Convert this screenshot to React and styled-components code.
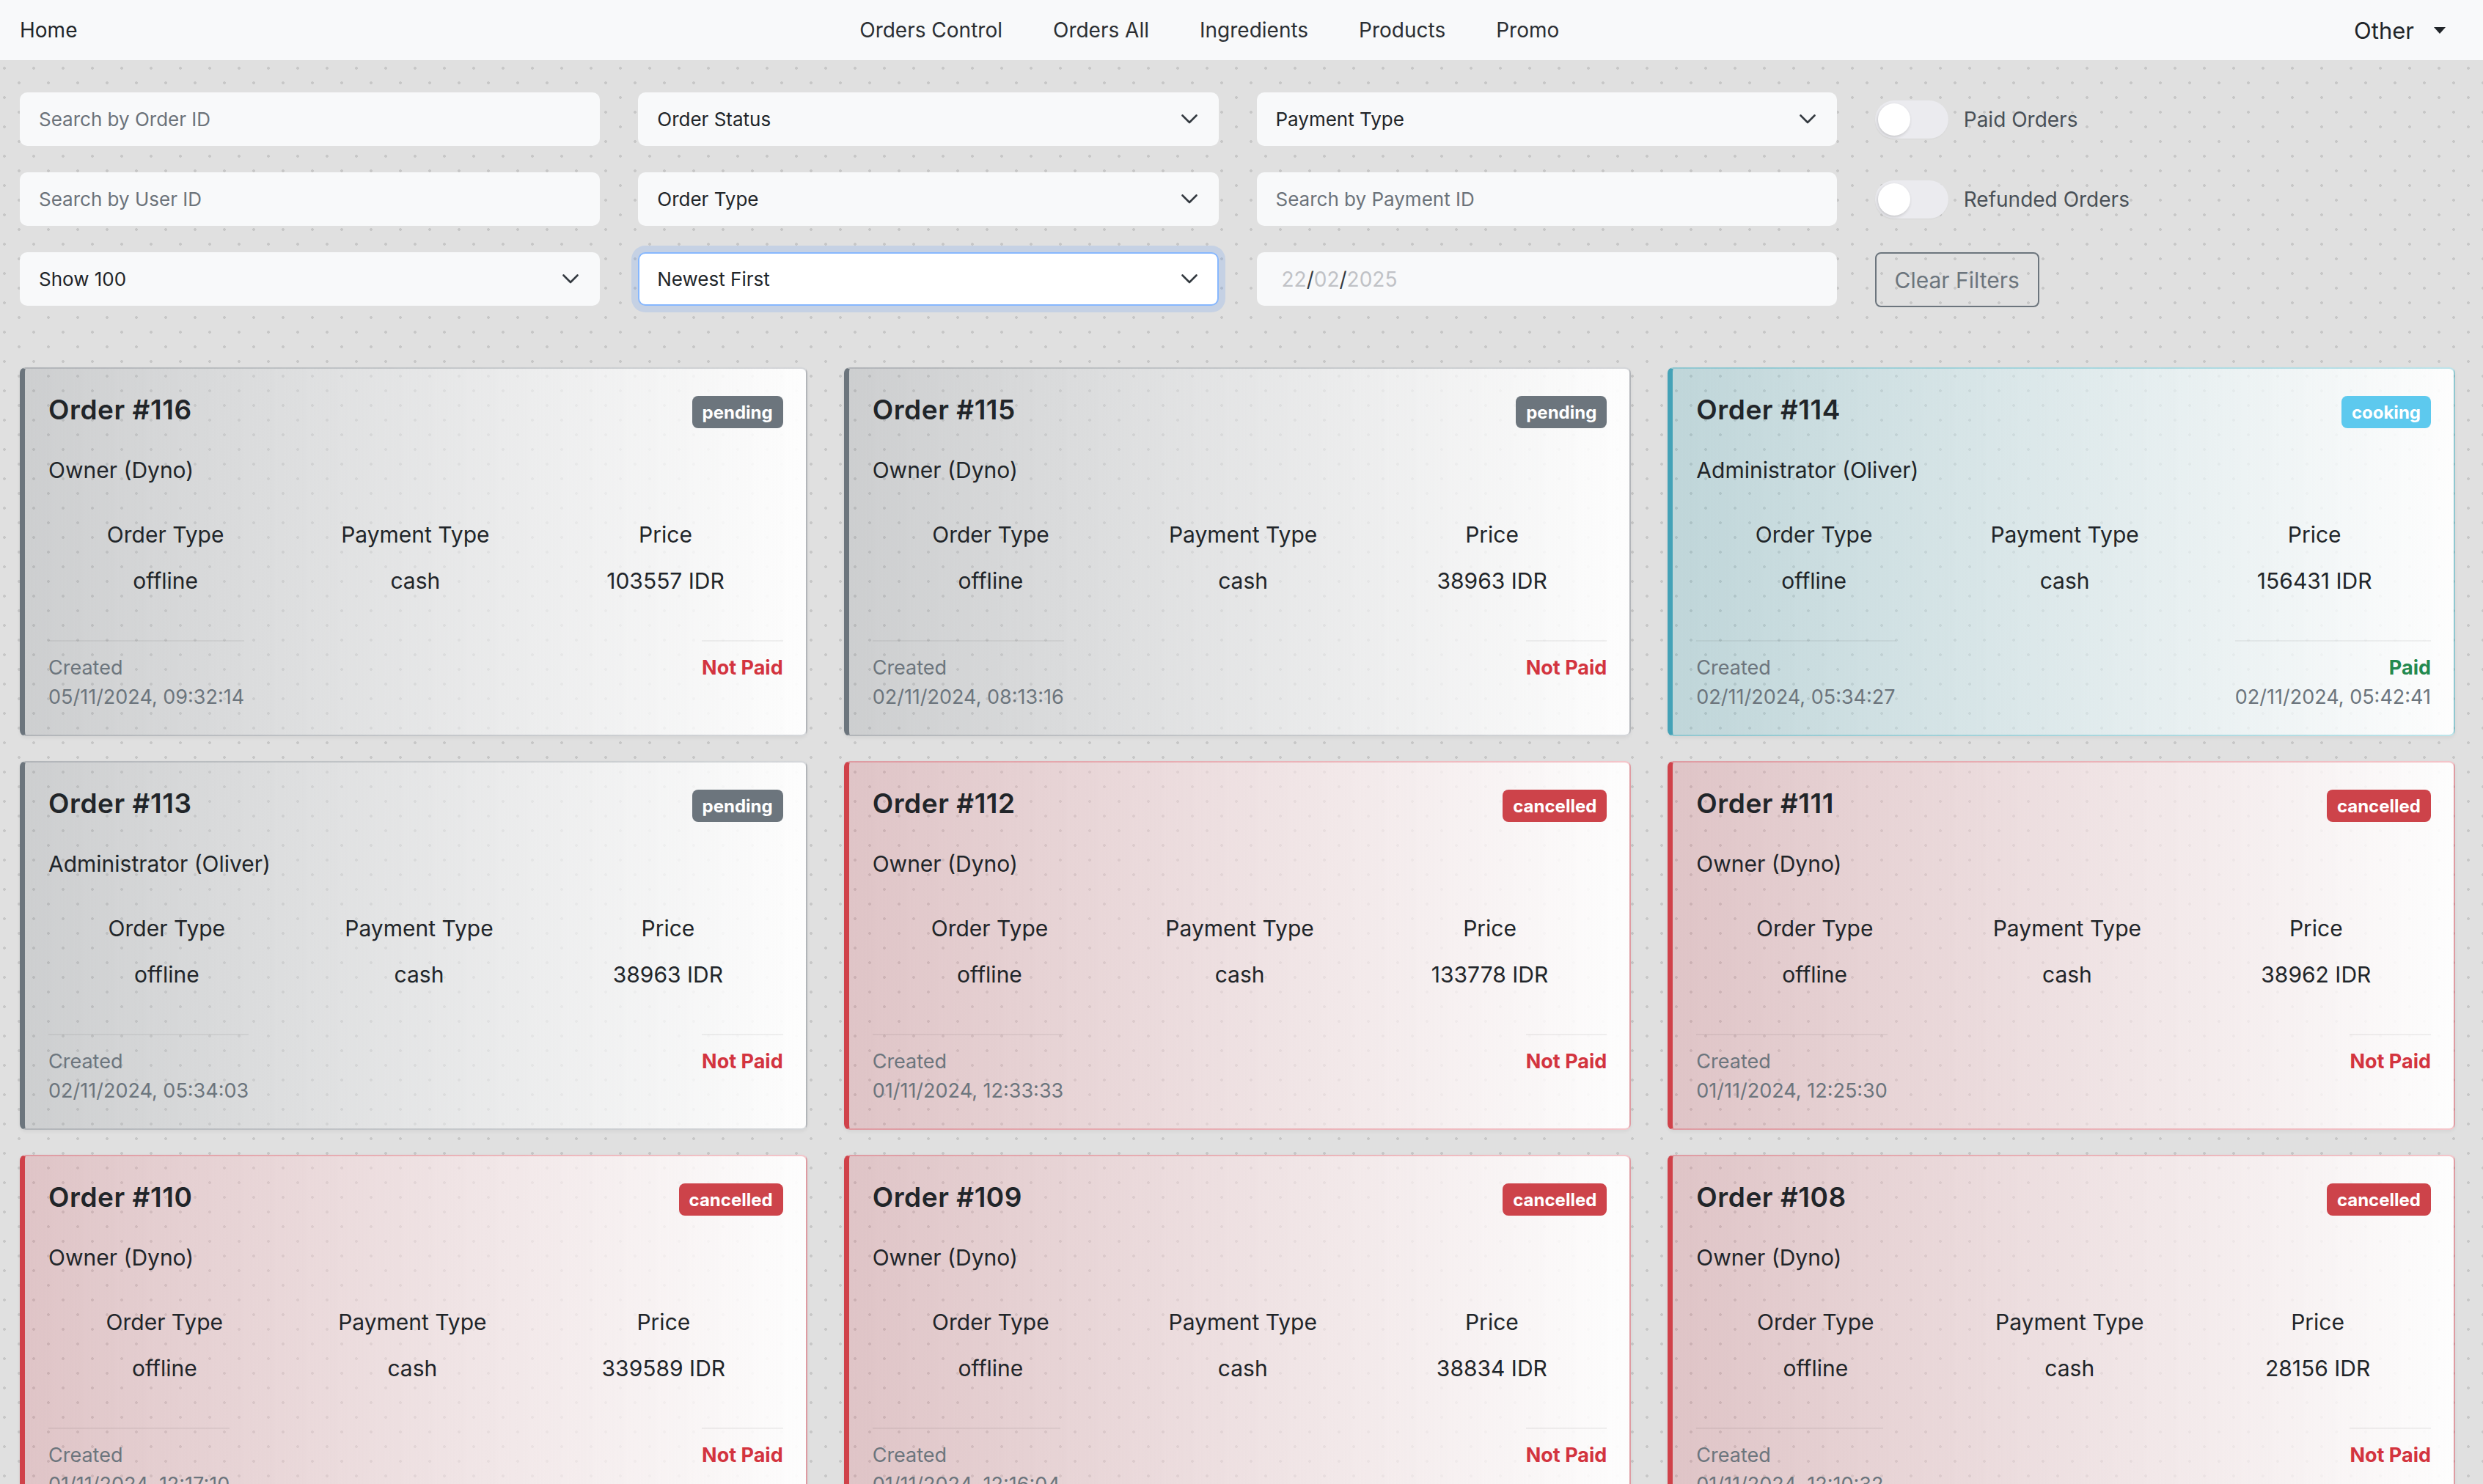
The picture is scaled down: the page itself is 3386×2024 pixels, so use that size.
import React from "react";
import styled, { createGlobalStyle } from "styled-components";

const GlobalStyle = createGlobalStyle`
  html, body {
    margin: 0;
    padding: 0;
  }
  body {
    font-family: Inter, "Noto Sans", "Liberation Sans", sans-serif;
    color: #212529;
    background-color: #e0e0e0;
    background-image:
      radial-gradient(circle at center, #c7c7c7 1.6px, transparent 2.2px),
      radial-gradient(circle at center, #c7c7c7 1.6px, transparent 2.2px);
    background-size: 40px 40px, 40px 40px;
    background-position: -14px -7px, 6px 13px;
    min-height: 2024px;
  }
  * { box-sizing: border-box; }
`;

const Nav = styled.nav`
  display: flex;
  align-items: center;
  height: 82px;
  background: #f8f9fa;
  padding: 0 34px 0 27px;
`;

const Brand = styled.span`
  font-size: 28px;
  color: #212529;
`;

const NavLinks = styled.div`
  display: flex;
  margin: 0 auto;
`;

const NavLink = styled.span`
  font-size: 28px;
  color: #2b2f33;
  padding: 0 34.5px;
`;

const Dropdown = styled.div`
  display: flex;
  align-items: center;
  padding: 0 17px;
  font-size: 31px;
  color: #212529;
`;

const Caret = styled.span`
  margin-left: 27px;
  width: 0;
  height: 0;
  border-top: 9px solid #212529;
  border-left: 8px solid transparent;
  border-right: 8px solid transparent;
`;

const Main = styled.main`
  padding: 44px 38px 0 27px;
`;

const Filters = styled.div`
  display: grid;
  grid-template-columns: repeat(4, 1fr);
  column-gap: 52px;
  row-gap: 36px;
`;

const Field = styled.input`
  height: 73px;
  width: 100%;
  border-radius: 10px;
  border: 2px solid transparent;
  background: #f8f9fa;
  padding: 0 24px;
  font-family: inherit;
  font-size: 26px;
  color: #212529;
  outline: none;
  &::placeholder {
    color: #6c737a;
  }
`;

const SelectBox = styled.div`
  height: 73px;
  border-radius: 10px;
  border: 2px solid ${(p) => (p.$focused ? "#86b7fe" : "transparent")};
  background: ${(p) => (p.$focused ? "#ffffff" : "#f8f9fa")};
  box-shadow: ${(p) => (p.$focused ? "0 0 0 9px rgba(13, 110, 253, 0.13)" : "none")};
  padding: 0 27px 0 24px;
  display: flex;
  align-items: center;
  justify-content: space-between;
  font-size: 26px;
  color: #212529;
`;

const DateBox = styled.div`
  height: 73px;
  border-radius: 10px;
  border: 2px solid transparent;
  background: #f8f9fa;
  padding: 0 32px;
  display: flex;
  align-items: center;
  font-size: 28px;
  color: #c0c2c6;
`;

const DateSep = styled.span`
  color: #343a40;
`;

const SwitchRow = styled.div`
  display: flex;
  align-items: center;
  height: 73px;
`;

const Track = styled.div`
  width: 100px;
  height: 52px;
  border-radius: 26px;
  background: #ebebef;
  padding: 4px;
  box-shadow: 0 1px 2px rgba(0, 0, 0, 0.04);
`;

const Knob = styled.div`
  width: 44px;
  height: 44px;
  border-radius: 50%;
  background: #ffffff;
  box-shadow: -1px 2px 4px rgba(0, 0, 0, 0.16);
`;

const SwitchLabel = styled.span`
  margin-left: 21px;
  font-size: 28px;
  color: #495057;
`;

const ClearButton = styled.button`
  align-self: center;
  justify-self: start;
  width: 224px;
  height: 75px;
  border: 2px solid #6c757d;
  border-radius: 8px;
  background: transparent;
  color: #6c757d;
  font-family: inherit;
  font-size: 30px;
  padding: 0;
`;

const Cards = styled.div`
  margin-top: 82px;
  display: grid;
  grid-template-columns: repeat(3, 1fr);
  column-gap: 50px;
  row-gap: 34px;
`;

const tones = {
  pending: { bar: "#6c757d", rgb: "108, 117, 125", badge: "#6c757d" },
  cooking: { bar: "#44a2b7", rgb: "23, 162, 184", badge: "#5dc9ee" },
  cancelled: { bar: "#d0424a", rgb: "220, 53, 69", badge: "#cd434a" },
};

const Card = styled.div`
  border: 2px solid rgba(${(p) => tones[p.$tone].rgb}, 0.28);
  border-left: 7px solid ${(p) => tones[p.$tone].bar};
  border-radius: 8px;
  background: linear-gradient(
    to right,
    rgba(${(p) => tones[p.$tone].rgb}, 0.16),
    rgba(255, 255, 255, 0.93)
  );
  box-shadow: 0 2px 5px rgba(0, 0, 0, 0.06);
  padding: 33px 31px 31px 32px;
`;

const CardHeader = styled.div`
  display: flex;
  justify-content: space-between;
  align-items: flex-start;
  height: 48px;
`;

const Title = styled.h5`
  margin: 0;
  font-size: 37px;
  line-height: 46px;
  font-weight: 600;
  letter-spacing: 0.015em;
  color: #212529;
`;

const Badge = styled.span`
  margin-top: 4px;
  height: 44px;
  padding: 0 14px;
  border-radius: 8px;
  background: ${(p) => tones[p.$tone].badge};
  color: #ffffff;
  font-size: 24px;
  font-weight: 700;
  display: inline-flex;
  align-items: center;
`;

const Owner = styled.div`
  margin-top: 39px;
  font-size: 30px;
  line-height: 36px;
`;

const InfoRow = styled.div`
  margin-top: 52px;
  display: flex;
  justify-content: space-around;
`;

const InfoCol = styled.div`
  display: flex;
  flex-direction: column;
  align-items: center;
  gap: 27px;
  font-size: 30px;
  line-height: 36px;
`;

const Footer = styled.div`
  margin-top: 63px;
  display: flex;
  justify-content: space-between;
  align-items: flex-start;
`;

const FooterBlock = styled.div`
  border-top: 2px solid rgba(0, 0, 0, 0.05);
  padding-top: 16px;
  font-size: 27px;
  line-height: 40px;
  text-align: ${(p) => p.$align};
`;

const Muted = styled.div`
  color: #6c757d;
`;

const PayStatus = styled.div`
  font-weight: 700;
  color: ${(p) => (p.$paid ? "#23894f" : "#d3343f")};
`;

const Chevron = () => (
  <svg width="22" height="13" viewBox="0 0 22 13" fill="none">
    <path d="M1.5 1.5 L11 11 L20.5 1.5" stroke="#343a40" strokeWidth="2.6" strokeLinecap="round" strokeLinejoin="round" />
  </svg>
);

const orders = [
  { id: 116, status: "pending", user: "Owner (Dyno)", price: "103557 IDR", created: "05/11/2024, 09:32:14" },
  { id: 115, status: "pending", user: "Owner (Dyno)", price: "38963 IDR", created: "02/11/2024, 08:13:16" },
  { id: 114, status: "cooking", user: "Administrator (Oliver)", price: "156431 IDR", created: "02/11/2024, 05:34:27", paidAt: "02/11/2024, 05:42:41" },
  { id: 113, status: "pending", user: "Administrator (Oliver)", price: "38963 IDR", created: "02/11/2024, 05:34:03" },
  { id: 112, status: "cancelled", user: "Owner (Dyno)", price: "133778 IDR", created: "01/11/2024, 12:33:33" },
  { id: 111, status: "cancelled", user: "Owner (Dyno)", price: "38962 IDR", created: "01/11/2024, 12:25:30" },
  { id: 110, status: "cancelled", user: "Owner (Dyno)", price: "339589 IDR", created: "01/11/2024, 12:17:10" },
  { id: 109, status: "cancelled", user: "Owner (Dyno)", price: "38834 IDR", created: "01/11/2024, 12:16:04" },
  { id: 108, status: "cancelled", user: "Owner (Dyno)", price: "28156 IDR", created: "01/11/2024, 12:10:32" },
];

const Toggle = ({ label }) => (
  <SwitchRow>
    <Track>
      <Knob />
    </Track>
    <SwitchLabel>{label}</SwitchLabel>
  </SwitchRow>
);

const Select = ({ label, focused }) => (
  <SelectBox $focused={focused}>
    <span>{label}</span>
    <Chevron />
  </SelectBox>
);

const OrderCard = ({ o }) => (
  <Card $tone={o.status}>
    <CardHeader>
      <Title>Order #{o.id}</Title>
      <Badge $tone={o.status}>{o.status}</Badge>
    </CardHeader>
    <Owner>{o.user}</Owner>
    <InfoRow>
      <InfoCol>
        <span>Order Type</span>
        <span>offline</span>
      </InfoCol>
      <InfoCol>
        <span>Payment Type</span>
        <span>cash</span>
      </InfoCol>
      <InfoCol>
        <span>Price</span>
        <span>{o.price}</span>
      </InfoCol>
    </InfoRow>
    <Footer>
      <FooterBlock $align="left">
        <Muted>Created</Muted>
        <Muted>{o.created}</Muted>
      </FooterBlock>
      <FooterBlock $align="right">
        <PayStatus $paid={!!o.paidAt}>{o.paidAt ? "Paid" : "Not Paid"}</PayStatus>
        {o.paidAt && <Muted>{o.paidAt}</Muted>}
      </FooterBlock>
    </Footer>
  </Card>
);

export default function App() {
  return (
    <>
      <GlobalStyle />
      <Nav>
        <Brand>Home</Brand>
        <NavLinks>
          <NavLink>Orders Control</NavLink>
          <NavLink>Orders All</NavLink>
          <NavLink>Ingredients</NavLink>
          <NavLink>Products</NavLink>
          <NavLink>Promo</NavLink>
        </NavLinks>
        <Dropdown>
          Other
          <Caret />
        </Dropdown>
      </Nav>
      <Main>
        <Filters>
          <Field placeholder="Search by Order ID" />
          <Select label="Order Status" />
          <Select label="Payment Type" />
          <Toggle label="Paid Orders" />
          <Field placeholder="Search by User ID" />
          <Select label="Order Type" />
          <Field placeholder="Search by Payment ID" />
          <Toggle label="Refunded Orders" />
          <Select label="Show 100" />
          <Select label="Newest First" focused />
          <DateBox>
            22<DateSep>/</DateSep>02<DateSep>/</DateSep>2025
          </DateBox>
          <ClearButton>Clear Filters</ClearButton>
        </Filters>
        <Cards>
          {orders.map((o) => (
            <OrderCard key={o.id} o={o} />
          ))}
        </Cards>
      </Main>
    </>
  );
}
